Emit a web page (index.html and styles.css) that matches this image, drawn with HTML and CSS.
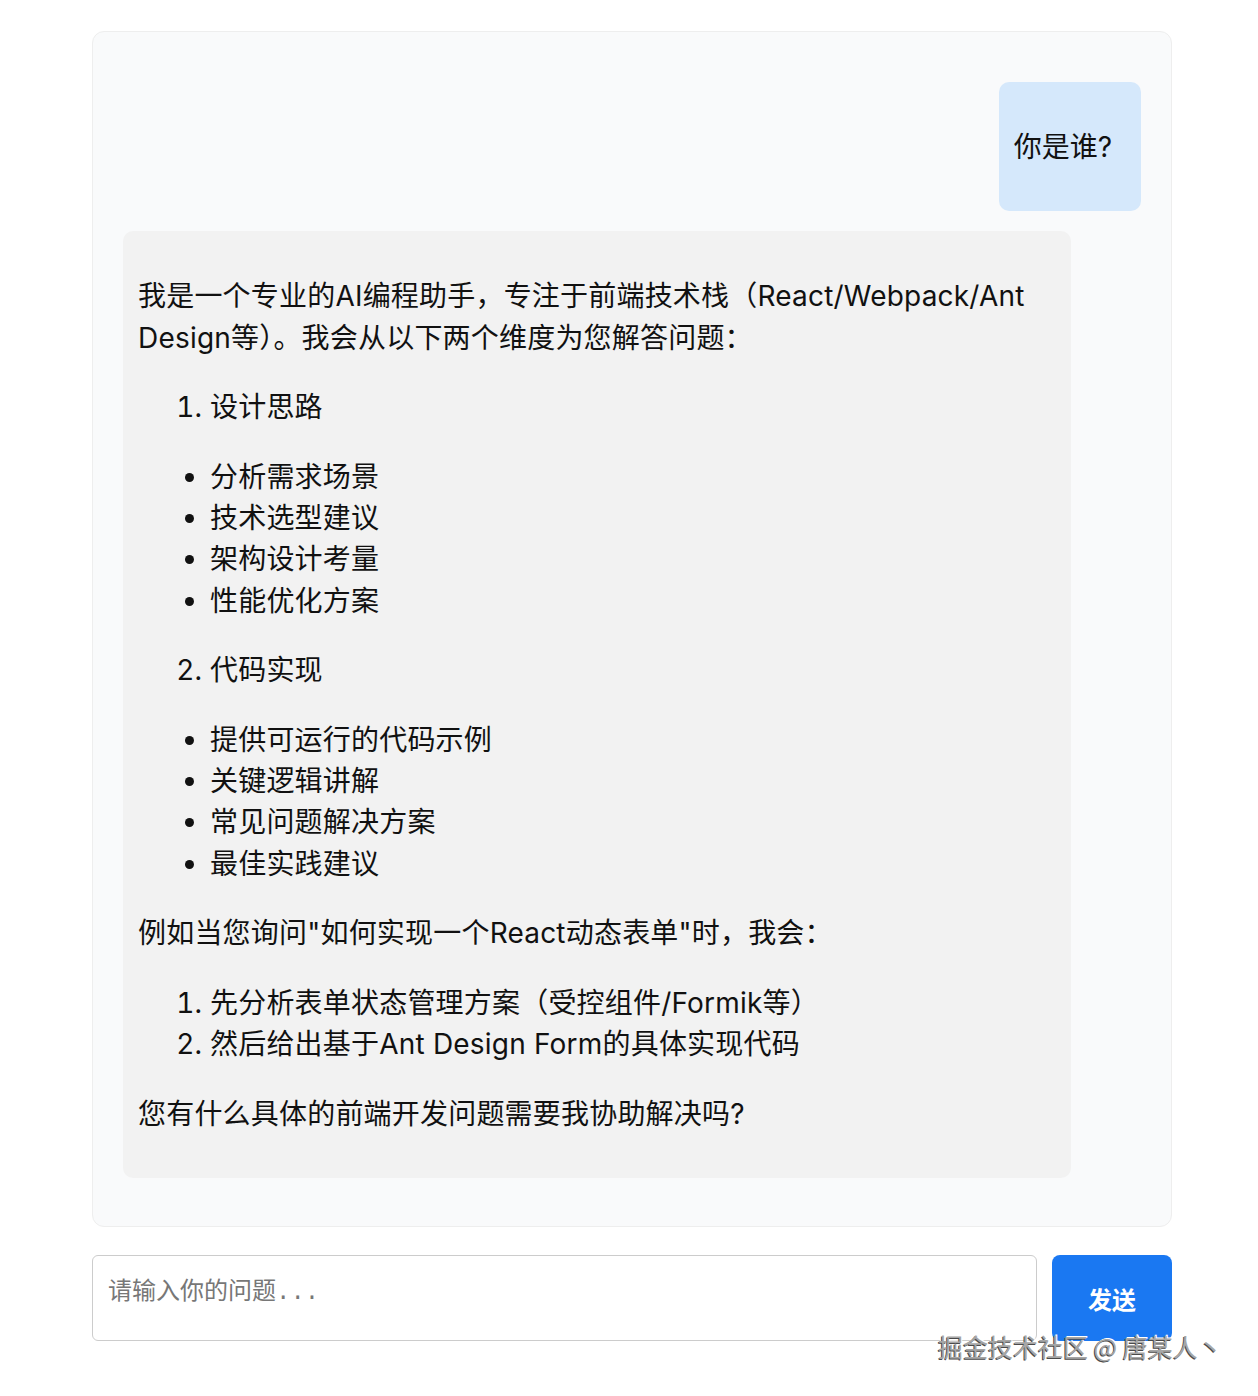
FILE: index.html
```html
<!DOCTYPE html>
<html lang="zh-CN">
<head>
<meta charset="utf-8">
<title>AI 编程助手</title>
<link rel="stylesheet" href="styles.css">
</head>
<body>
<div class="app">
  <div class="chat">
    <div class="msg msg-user">
      <div class="bubble bubble-user"><p>你是谁?</p></div>
    </div>
    <div class="msg msg-bot">
      <div class="bubble bubble-bot">
        <p>我是一个专业的AI编程助手，专注于前端技术栈（React/Webpack/Ant Design等）。我会从以下两个维度为您解答问题：</p>
        <ol><li>设计思路</li></ol>
        <ul>
          <li>分析需求场景</li>
          <li>技术选型建议</li>
          <li>架构设计考量</li>
          <li>性能优化方案</li>
        </ul>
        <ol start="2"><li>代码实现</li></ol>
        <ul>
          <li>提供可运行的代码示例</li>
          <li>关键逻辑讲解</li>
          <li>常见问题解决方案</li>
          <li>最佳实践建议</li>
        </ul>
        <p>例如当您询问"如何实现一个React动态表单"时，我会：</p>
        <ol>
          <li>先分析表单状态管理方案（受控组件/Formik等）</li>
          <li>然后给出基于Ant Design Form的具体实现代码</li>
        </ol>
        <p>您有什么具体的前端开发问题需要我协助解决吗?</p>
      </div>
    </div>
  </div>
  <div class="composer">
    <textarea class="input" placeholder="请输入你的问题..."></textarea>
    <button class="send">发送</button>
  </div>
</div>
<div class="watermark">掘金技术社区 @ 唐某人丶</div>
</body>
</html>
```

FILE: styles.css
```css
html, body {
  margin: 0;
  padding: 0;
  background: #ffffff;
}
body {
  font-family: "Inter", "Noto Sans CJK SC", sans-serif;
  color: #111111;
  position: relative;
  min-height: 1396px;
}
.app {
  width: 1080px;
  margin: 31px 0 0 92px;
}
.chat {
  box-sizing: border-box;
  height: 1196px;
  padding: 30px;
  background: #f9fafb;
  border: 1px solid #eeeeee;
  border-radius: 12px;
}
.msg {
  margin: 20px 0;
  display: flex;
}
.msg-user {
  justify-content: flex-end;
}
.msg-bot {
  justify-content: flex-start;
}
.bubble {
  font-size: 28px;
  line-height: 41.4px;
  padding: 17px 15px 15px;
  border-radius: 10px;
}
.bubble p,
.bubble ol,
.bubble ul {
  margin: 28px 0;
}
.bubble ol,
.bubble ul {
  padding-left: 72px;
}
.bubble-user {
  background: #d5e8fb;
  padding-right: 29px;
}
.bubble-bot {
  background: #f2f2f2;
  box-sizing: border-box;
  width: 948px;
  letter-spacing: 0.2px;
}
.composer {
  display: flex;
  gap: 15px;
  margin-top: 28px;
  height: 86px;
}
.input {
  flex: 1;
  box-sizing: border-box;
  height: 86px;
  padding: 15px;
  font-family: "Liberation Mono", "Noto Sans CJK SC", monospace;
  font-size: 24px;
  border: 1px solid #cccccc;
  border-radius: 6px;
  resize: none;
  background: #ffffff;
}
.input::placeholder {
  color: #777777;
}
.send {
  width: 120px;
  height: 86px;
  border: none;
  border-radius: 8px;
  background: #1a78f2;
  color: #ffffff;
  font-family: "Inter", "Noto Sans CJK SC", sans-serif;
  font-size: 24px;
  font-weight: 700;
}
.watermark {
  position: absolute;
  left: 938px;
  top: 1329px;
  font-family: "Noto Sans CJK SC", sans-serif;
  font-size: 25px;
  line-height: 34px;
  color: #a6a6a6;
  text-shadow: -1px 1px 0 #4a4a4a, 1px -1px 0 #ffffff;
  white-space: nowrap;
}
```
